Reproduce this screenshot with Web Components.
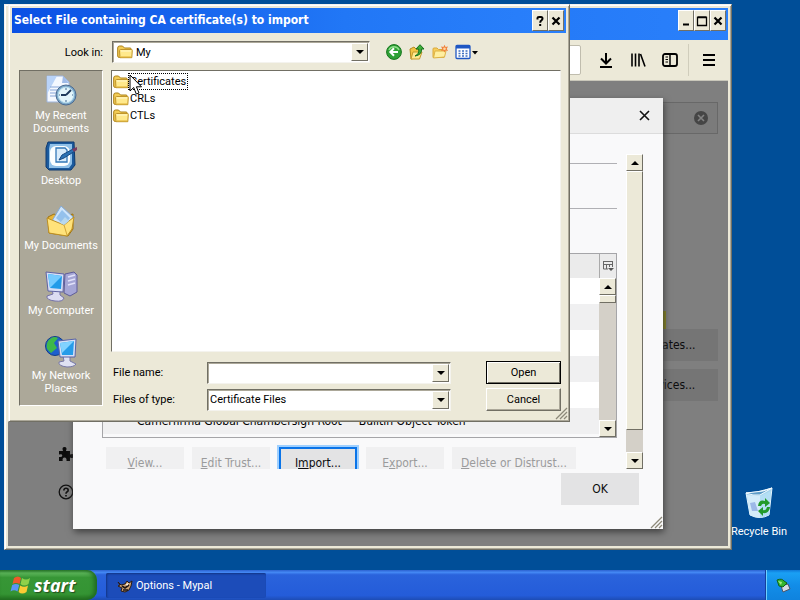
<!DOCTYPE html>
<html lang="en">
<head>
<meta charset="utf-8">
<title>Options - Mypal</title>
<style>
  html, body { height: 100%; }
  body {
    margin: 0;
    overflow: hidden;
    font: 11px/13px Roboto, "Liberation Sans", sans-serif;
    color: #000;
    --face: #ece9d8;
    --shadow: #aca899;
    --dark: #716f64;
    --title-font: bold 12px/16px "DejaVu Sans Condensed", "DejaVu Sans", sans-serif;
    --page-font: 12px/16px "DejaVu Sans Condensed", "DejaVu Sans", sans-serif;
  }
</style>
</head>
<body>
<xp-desktop>
  <xp-shortcut icon="bin">Recycle Bin</xp-shortcut>
  <browser-window></browser-window>
  <file-dialog></file-dialog>
  <task-bar slot="taskbar"></task-bar>
</xp-desktop>

<script>
  // inline svg icons, looked up by name
  const ICONS = {
    folder: ['0 0 16 14', `<path d="M.7 3Q.7 1 2.500 1H5.500L7.500 3H13Q14.300 3 14.300 4.500V12.500H2.500Q.7 12.500 .7 11Z" fill="#f3cc55" stroke="#ab8017"/><path d="M2.500 5.500Q2.500 4.500 3.500 4.500H14.500Q15.500 4.500 15.300 5.500L14.800 12.700H3Z" fill="#ffe98c" stroke="#c1952b"/><path d="M4 6H14" stroke="#fff8d0"/><path d="M3.500 11.800H14.300" stroke="#e9bf4a"/>`],
    back: ['0 0 16 16', `<circle cx="8" cy="8" r="7.400" fill="#2fa136" stroke="#15761c"/><path d="M3 6A5.500 5.500 0 0 1 13 6" fill="none" stroke="#8fdf8a" stroke-width="1.500"/><path d="M12 8H4.500M8 4.300L4.300 8L8 11.700" fill="none" stroke="#fff" stroke-width="2"/>`],
    up: ['0 0 16 16', `<path d="M1 5L5 3L7 5H11V13L2 15Z" fill="#f3c445" stroke="#b58a1e"/><path d="M2 15L4 8H13L10.500 15Z" fill="#ffe88f" stroke="#c39a2c"/><path d="M6 12Q10.500 10 9.700 5H7L11 .7L15 5H12.500Q13 11 6 12Z" fill="#3fae3a" stroke="#17721c"/>`],
    newfolder: ['0 0 16 16', `<path d="M1 5Q1 4 2 4H5L6.500 5.500H12V13.500H1Z" fill="#f7cd5c" stroke="#d9a93a"/><path d="M1.500 14L3 7H14L12.500 13Z" fill="#ffefa0" stroke="#dcb347"/><path d="M12.500 .8L13.600 3L16 2.600L14.800 4.800L16 7L13.600 6.600L12.500 8.600L11.400 6.600L9 7L10.200 4.800L9 2.600L11.400 3Z" fill="#f0813c"/><circle cx="12.500" cy="4.700" r="1.300" fill="#ffd9a0"/>`],
    views: ['0 0 24 16', `<rect x="1" y="1.500" width="14" height="13" rx="1" fill="#fff" stroke="#1f57c3" stroke-width="1.300"/><path d="M1 3H15" stroke="#1f57c3" stroke-width="3"/><path d="M3.500 7H5.500M7 7H9M10.500 7H12.500M3.500 9.500H5.500M7 9.500H9M10.500 9.500H12.500M3.500 12H5.500M7 12H9M10.500 12H12.500" stroke="#3d6fc0" stroke-width="1.400"/><path d="M17 7H23L20 10.500Z"/>`],
    down: ['0 0 8 4', `<path d="M0 0H8L4 4Z"/>`],
    upward: ['0 0 8 4', `<path d="M0 4H8L4 0Z"/>`],
    grip: ['0 0 12 12', `<path d="M1 12L12 1M5 12L12 5M9 12L12 9" stroke="#8d897a" stroke-width="1.300"/>`],
    close: ['0 0 11 11', `<path d="M1 1L10 10M10 1L1 10" stroke="currentColor" stroke-width="1.600"/>`],
    boldclose: ['0 0 10 10', `<path d="M1.500 1.500L8.500 8.500M8.500 1.500L1.500 8.500" stroke="#000" stroke-width="2.200"/>`],
    help: ['0 0 10 10', `<path d="M2.500 3.500V2Q2.500 1 4 1H6Q7.500 1 7.500 2.500Q7.500 3.500 6.500 4.300Q5.200 5 5.200 6.800M5.200 8V10" fill="none" stroke="#000" stroke-width="2"/>`],
    minimize: ['0 0 10 10', `<path d="M2 8.500H8" stroke="#000" stroke-width="2"/>`],
    maximize: ['0 0 10 10', `<path d="M.5 1.500H9.500V9.500H.5ZM.5 1H9.500" fill="none" stroke="#000" stroke-width="1.300"/>`],
    download: ['0 0 16 16', `<path d="M8 1V11M3 6.500L8 11.500L13 6.500M2 15H14" fill="none" stroke="#000" stroke-width="2"/>`],
    library: ['0 0 16 16', `<path d="M2 1.500V14.500M5.500 1.500V14.500M9 1.500V14.500M10.500 2L15 14.500" stroke="#000" stroke-width="1.600"/>`],
    sidebar: ['0 0 16 16', `<rect x="1" y="2" width="14" height="12" rx="2" fill="none" stroke="#000" stroke-width="1.800"/><path d="M8 2V14" stroke="#000" stroke-width="1.500"/><path d="M3.500 5H6M3.500 7.500H6M3.500 10H6" stroke="#000"/>`],
    menu: ['0 0 16 16', `<path d="M2 3H14M2 8H14M2 13H14" stroke="#000" stroke-width="2"/>`],
    clear: ['0 0 16 16', `<circle cx="8" cy="8" r="7" fill="#454545"/><path d="M5 5L11 11M11 5L5 11" stroke="#828282" stroke-width="1.600"/>`],
    puzzle: ['0 0 16 16', `<path d="M1 5H5Q3.500 1 6.500 1Q9.500 1 8 5H12V8.500Q16 7 16 10Q16 13 12 11.500V15H8.500Q9 11.500 6.500 11.500Q4 11.500 4.700 15H1V11Q4.300 11.500 4.300 9.500Q4.300 7.500 1 8.500Z" fill="#0c0c0c"/>`],
    question: ['0 0 16 16', `<circle cx="8" cy="8" r="6.800" fill="none" stroke="#111" stroke-width="1.300"/><path d="M5.800 6.500Q6 4.300 8 4.300Q10.200 4.300 10.200 6.200Q10.200 7.300 8.900 8Q8 8.500 8 9.800M8 11V12.600" fill="none" stroke="#111" stroke-width="1.600"/>`],
    picker: ['0 0 12 12', `<path d="M1 1.500H11M1 4.500H11M1.500 1V9H6M4.500 4V9M7.500 4V7M10.500 1V7" fill="none" stroke="#666"/><path d="M6 8H12L9 11Z" fill="#555"/>`],
    cursor: ['0 0 14 22', `<path d="M1 1V17L4.700 13.500L7.300 20L10 19L7.400 12.800H12.500Z" fill="#fff" stroke="#000"/>`],
    recent: ['0 0 32 32', `<path d="M2 1H18L24 7V27H2Z" fill="#f4f8ff" stroke="#9db4dc"/><path d="M2 1H12L2 19Z" fill="#b9d3f8"/><path d="M18 1L17 8H24Z" fill="#9fbbe8"/><path d="M5 12H19M5 15H15M5 18H14M5 21H14" stroke="#86a5d8"/><circle cx="21" cy="20" r="10" fill="#7ba7c9" stroke="#496a91"/><circle cx="21" cy="20" r="7.800" fill="#e3f5fb" stroke="#b6dcec"/><path d="M21 20L26 15M21 20H16" stroke="#203a5c" stroke-width="1.800"/><path d="M21 13V15M21 25V27M27 20H28M14 20H15" stroke="#426893"/>`],
    desktop: ['0 0 32 32', `<path d="M3 2H29L30 25L26 30H4L1 27V8Z" fill="#1b5a9d" stroke="#103b70"/><path d="M5 4H27V24L24 28H4V9Z" fill="#8fc0e8"/><rect x="5" y="6" width="20" height="20" rx="6" fill="#fbfeff"/><path d="M11 8H20L22 10V22H11Z" fill="#d9ecfb" stroke="#3378b8" stroke-width="1.300"/><path d="M14 20L17 15L28 9L30 11L19 18Z" fill="#2c72b4" stroke="#184a82"/><path d="M27 9L32 7V10L29 12Z" fill="#7b3c60"/>`],
    documents: ['0 0 32 32', `<path d="M3 12L9 9L16 12L28 9V24L23 31L4 28Z" fill="#e7b53a" stroke="#9f7412"/><path d="M7 16L16 1L28 12L25 23L10 24Z" fill="#cfe5fb" stroke="#83abd9"/><path d="M11 13L17 5L25 13L19 20Z" fill="#94c1ec"/><path d="M2 13L19 20L29 12L27 24L22 31L4 28Z" fill="#ffe27a" stroke="#bc8f24"/><path d="M15 18L20 12L24 16L19 20Z" fill="#b7d8ee"/><path d="M19 20L22 30" stroke="#d3a636"/>`],
    computer: ['0 0 32 32', `<path d="M20 4L29 2L32 5V22L25 26L19 23Z" fill="#a5a6d6" stroke="#5f5d99"/><path d="M23 7L30 5M23 11L30 9M23 15L30 13" stroke="#e2e2fa" stroke-width="1.500"/><path d="M7 19H15V25L19 28Q18 32 10 31Q1 30 2 26L8 24Z" fill="#dcdcf2" stroke="#7472a8"/><path d="M1 2L19 4L18 22L3 21Z" fill="#d7def5" stroke="#6063a4"/><path d="M3 4L17 6L16 19L5 18Z" fill="#219be9"/><path d="M3 4L17 6L6 17L5 18Z" fill="#76cbff"/>`],
    network: ['0 0 32 32', `<circle cx="10" cy="11" r="9.500" fill="#1e5fcd" stroke="#123c88"/><path d="M3 6Q8 0 13 3L9 8L12 13L6 18Q-1 13 3 6Z" fill="#3fb849"/><path d="M18 21H25V26L31 29Q29 32 22 32Q13 31 14 27L19 26Z" fill="#e0e2f3" stroke="#7879a8"/><path d="M13 6L31 4L30 22L15 22Z" fill="#d7e0f6" stroke="#5963a5"/><path d="M15 8L29 6L28 20L17 20Z" fill="#269ce9"/><path d="M15 8L29 6L17 18Z" fill="#82d2ff"/>`],
    bin: ['0 0 32 32', `<path d="M3 6L14 5L29 1L26 28Q17 33 7 28Z" fill="#a5d4ee" stroke="#e4f5ff"/><path d="M3 6Q10 9 17 8L29 1L20 4Z" fill="#5f9dc8" stroke="#f4fbff"/><path d="M4 8L17 9V31Q12 31 7 28Z" fill="#d3ecfa"/><path d="M17 9L28 4L26 28L17 31Z" fill="#b3def4"/><path d="M7 16L12 15L15 24L9 24Z" fill="#9db9e8"/><path d="M15 19Q16 12 22 14V11L27 16L22 20V17Q19 16 18 19ZM27 20Q26 27 20 26V29L15 24L20 20V23Q23 24 24 20Z" fill="#219a2a"/>`],
    flag: ['0 0 22 20', `<path d="M4 3Q8 0 11 3L9.500 9Q6 7 2.500 9Z" fill="#f0592a"/><path d="M12 3Q16 6 20 3L18.500 9Q14 12 10.500 9Z" fill="#8fd14a"/><path d="M2.200 10Q6 8 9.200 10L7.500 16.500Q4 14 .5 16.500Z" fill="#5b95f5"/><path d="M10.200 10.500Q14 13 18 10.500L16.500 17Q12 20 8.600 17Z" fill="#fbcb34"/>`],
    mypal: ['0 0 16 16', `<path d="M1 4L4 7L8 6L10 3L12 5L15 3L14 8L12 12L8 14L4 13L5 10L1 8L3 7Z" fill="#cda274" stroke="#2a1a12"/><path d="M5 8L8 10L12 7M6 12H11" stroke="#1d1512" stroke-width="1.600" fill="none"/><path d="M9 6L12 5L10 8Z" fill="#fff"/>`],
    tray: ['0 0 16 16', `<path d="M6 9L13 7L15 12L8 15Z" fill="#d6dbe4" stroke="#4b5568"/><path d="M2 3Q7 1 9 4L12 6L8 10L4 9Z" fill="#35b52f" stroke="#11631a"/><path d="M3 4L7 5L6 8Z" fill="#a4ee83"/>`]
  };

  class XpElement extends HTMLElement {
    constructor(template) {
      super();
      const shadow = this.attachShadow({ mode: "open" });
      shadow.innerHTML = template;
    }
  }

  class XpIcon extends HTMLElement {
    connectedCallback() {
      const [box, art] = ICONS[this.getAttribute("name")];
      const size = box.split(" ");
      const shadow = this.attachShadow({ mode: "open" });
      shadow.innerHTML = `
      <style>
        :host { display: block; flex: none; }
        svg { display: block; overflow: visible; }
      </style>
      <svg width="${size[2]}" height="${size[3]}" viewBox="${box}" aria-hidden="true">${art}</svg>`;
    }
  }
  customElements.define("xp-icon", XpIcon);

  // square caption button in the title bars
  class CaptionButton extends HTMLElement {
    connectedCallback() {
      const shadow = this.attachShadow({ mode: "open" });
      shadow.innerHTML = `
      <style>
        :host { display: block; }
        button {
          display: flex;
          align-items: center;
          justify-content: center;
          width: 16px;
          height: 21px;
          padding: 0;
          background: var(--face);
          border: 1px solid;
          border-color: #fff var(--dark) var(--dark) #fff;
        }
      </style>
      <button type="button" aria-label="${this.getAttribute("label")}"><xp-icon name="${this.getAttribute("icon")}"></xp-icon></button>`;
    }
  }
  customElements.define("caption-button", CaptionButton);

  // vertical scrollbar: thumb and rest are the flex values of the two parts of the track
  class ScrollBar extends HTMLElement {
    connectedCallback() {
      const shadow = this.attachShadow({ mode: "open" });
      shadow.innerHTML = `
      <style>
        :host { display: flex; flex-direction: column; flex: none; width: 17px; background: #d4d0c8; }
        button {
          display: flex;
          align-items: center;
          justify-content: center;
          flex: none;
          height: 17px;
          padding: 0;
          background: var(--face);
          border: 1px solid;
          border-color: #fff var(--dark) var(--dark) #fff;
        }
        .thumb {
          flex: ${this.getAttribute("thumb")};
          background: var(--face);
          border: 1px solid;
          border-color: #fff var(--dark) var(--dark) #fff;
        }
        .rest { flex: ${this.getAttribute("rest")}; }
      </style>
      <button type="button" aria-label="Scroll up"><xp-icon name="upward"></xp-icon></button>
      <div class="thumb"></div>
      <div class="rest"></div>
      <button type="button" aria-label="Scroll down"><xp-icon name="down"></xp-icon></button>`;
    }
  }
  customElements.define("scroll-bar", ScrollBar);

  class XpWindow extends XpElement {
    constructor() {
      super(`
      <style>
        :host {
          box-sizing: border-box;
          display: flex;
          flex-direction: column;
          background: var(--face);
          border: 1px solid;
          border-color: #f4f3ee #716f64 #716f64 #f4f3ee;
          box-shadow: inset 1px 1px #fff, inset -1px -1px #aca899;
          padding: 3px;
        }
        header {
          display: flex;
          flex: none;
          align-items: flex-start;
          height: var(--bar, 25px);
          padding: 2px 2px 0;
          box-sizing: border-box;
          background: linear-gradient(90deg, #0a50e4, #2177f6 60%, #2a80fb);
          color: #fff;
          font: var(--title-font);
        }
        h1 { flex: 1; margin: 0; padding-top: 2px; font: inherit; white-space: nowrap; }
        .buttons { display: flex; }
        .body { flex: 1; min-height: 0; display: flex; flex-direction: column; }
      </style>
      <header>
        <h1><slot name="title"></slot></h1>
        <div class="buttons"><slot name="buttons"></slot></div>
      </header>
      <div class="body"><slot></slot></div>`);
    }
  }
  customElements.define("xp-window", XpWindow);

  // flat button of the options page
  class PageButton extends HTMLElement {
    connectedCallback() {
      const off = this.hasAttribute("disabled") ? "disabled" : "";
      const shadow = this.attachShadow({ mode: "open" });
      shadow.innerHTML = `
      <style>
        :host { display: block; }
        button {
          display: block;
          width: 100%;
          min-width: 78px;
          height: 32px;
          padding: 0 8px;
          border: 0;
          background: var(--fill, #e3e3e4);
          color: #0c0c0d;
          font: var(--page-font);
          white-space: nowrap;
        }
        button:disabled { background: #f0f0f1; color: #9b9b9c; }
        :host([focused]) button { border: 2px solid #0a74e8; box-shadow: 0 0 0 2px #9fd0ff; }
      </style>
      <button type="button" ${off}><slot></slot></button>`;
    }
  }
  customElements.define("page-button", PageButton);

  class CertificateManager extends XpElement {
    constructor() {
      super(`
      <style>
        :host { display: flex; flex-direction: column; background: #f9f9fa; box-shadow: 1px 3px 7px #404040; font: var(--page-font); }
        header {
          display: flex;
          flex: none;
          justify-content: flex-end;
          align-items: center;
          height: 35px;
          padding: 0 13px;
          background: #efefef;
          border-bottom: 1px solid #dcdcdc;
        }
        .close { display: flex; padding: 0; border: 0; background: none; color: #111; }
        .area { flex: 1; min-height: 0; display: flex; gap: 9px; margin: 20px 20px 4px 29px; overflow: hidden; }
        .content { flex: 1; min-width: 0; }
        .line { height: 44px; border-top: 1px solid #b0b0b4; }
        .line:first-child { margin-top: 9px; }
        .tree { display: flex; height: 183px; border: 1px solid #a5a5a8; margin-bottom: 9px; }
        .side { display: flex; flex-direction: column; }
        .picker { display: flex; align-items: center; justify-content: center; height: 24px; padding: 0; border: 0; border-left: 1px solid #aaa; background: #ebebeb; }
        .side scroll-bar { flex: 1; }
        table { flex: 1; border-collapse: collapse; align-self: flex-start; }
        thead td { height: 24px; background: #ebebeb; }
        td { padding: 0 0 0 17px; height: 26px; white-space: nowrap; }
        td:first-child { padding-left: 34px; width: 202px; }
        tbody tr { background: #fff; }
        tbody tr:nth-child(even) { background: #f0f0f1; }
        .actions { display: flex; gap: 8px; padding: 0 4px; }
        .import { padding: 0 1px; }
        .wide { min-width: 124px; }
        footer { display: flex; justify-content: flex-end; padding: 0 24px 24px; position: relative; }
        .grip { position: absolute; right: 1px; bottom: 1px; }
      </style>
      <header><button class="close" type="button" aria-label="Close"><xp-icon name="close"></xp-icon></button></header>
      <div class="area">
        <div class="content">
          <div class="line"></div>
          <div class="line"></div>
          <div class="tree">
            <table>
              <thead><tr><td></td><td></td></tr></thead>
              <tbody>
                <tr><td></td><td></td></tr>
                <tr><td></td><td></td></tr>
                <tr><td></td><td></td></tr>
                <tr><td></td><td></td></tr>
                <tr><td></td><td></td></tr>
                <tr><td>Camerfirma Global Chambersign Root</td><td>Builtin Object Token</td></tr>
              </tbody>
            </table>
            <div class="side">
              <button class="picker" type="button" aria-label="Select columns"><xp-icon name="picker"></xp-icon></button>
              <scroll-bar thumb="0 0 6px" rest="1"></scroll-bar>
            </div>
          </div>
          <div class="actions">
            <page-button disabled><u>V</u>iew...</page-button>
            <page-button disabled><u>E</u>dit Trust...</page-button>
            <page-button class="import" focused>I<u>m</u>port...</page-button>
            <page-button disabled>E<u>x</u>port...</page-button>
            <page-button disabled class="wide"><u>D</u>elete or Distrust...</page-button>
          </div>
        </div>
        <scroll-bar thumb="260" rest="22"></scroll-bar>
      </div>
      <footer><page-button>OK</page-button><xp-icon class="grip" name="grip"></xp-icon></footer>`);
    }
  }
  customElements.define("certificate-manager", CertificateManager);

  class BrowserWindow extends XpElement {
    constructor() {
      super(`
      <style>
        :host { position: absolute; inset: 4px 68px 20px 4px; }
        xp-window { height: 100%; --bar: 32px; }
        caption-button:last-child { margin-left: 2px; }
        nav { display: flex; flex: none; align-items: center; justify-content: flex-end; height: 41px; box-sizing: border-box; padding: 0 11px; gap: 16px; border-bottom: 1px solid #c9c7ba; }
        nav button { display: flex; padding: 0; border: 0; background: none; }
        nav hr { width: 0; height: 32px; margin: 0 -4px 0 -6px; border: 0; border-left: 1px solid #d0cdbc; }
        .url { flex: 1; min-width: 0; height: 30px; box-sizing: border-box; margin-right: 1px; border: 1px solid #c0bdae; border-radius: 2px; background: #fff; }
        .page { flex: 1; position: relative; background: #7f7f7f; display: flex; justify-content: space-between; }
        .rail { display: flex; flex-direction: column; justify-content: flex-end; gap: 22px; padding: 0 50px 46px; }
        .rail a { display: block; }
        .main { display: flex; flex-direction: column; align-items: flex-end; padding: 21px 10px 0; }
        .search { display: flex; align-items: center; width: 280px; height: 32px; box-sizing: border-box; border: 1px solid #686868; background: #7b7b7b; padding: 0 8px; }
        .search input { flex: 1; min-width: 0; border: 0; background: none; }
        .main page-button { --fill: #757575; width: 146px; margin-bottom: 8px; }
        .mark { width: 24px; height: 18px; margin: 177px 52px 0 0; background: #8b8a14; }
        certificate-manager { position: absolute; inset: 17px 65px; }
      </style>
      <xp-window>
        <caption-button slot="buttons" icon="minimize" label="Minimize"></caption-button>
        <caption-button slot="buttons" icon="maximize" label="Maximize"></caption-button>
        <caption-button slot="buttons" icon="boldclose" label="Close"></caption-button>
        <nav>
          <input class="url" aria-label="Address">
          <button type="button" aria-label="Downloads"><xp-icon name="download"></xp-icon></button>
          <button type="button" aria-label="Library"><xp-icon name="library"></xp-icon></button>
          <button type="button" aria-label="Sidebars"><xp-icon name="sidebar"></xp-icon></button>
          <hr>
          <button type="button" aria-label="Menu"><xp-icon name="menu"></xp-icon></button>
        </nav>
        <div class="page">
          <div class="rail">
            <a href="#addons" aria-label="Add-ons"><xp-icon name="puzzle"></xp-icon></a>
            <a href="#support" aria-label="Support"><xp-icon name="question"></xp-icon></a>
          </div>
          <div class="main">
            <div class="search"><input aria-label="Find in options"><xp-icon name="clear"></xp-icon></div>
            <div class="mark"></div>
            <page-button>View Certificates...</page-button>
            <page-button>Security Devices...</page-button>
          </div>
          <certificate-manager></certificate-manager>
        </div>
      </xp-window>`);
    }
  }
  customElements.define("browser-window", BrowserWindow);

  // sunken field with a drop-down arrow; the control itself is slotted
  class ComboBox extends XpElement {
    constructor() {
      super(`
      <style>
        :host {
          display: flex;
          align-items: center;
          height: 22px;
          box-sizing: border-box;
          background: #fff;
          border: 1px solid;
          border-color: var(--dark) #f4f3ee #f4f3ee var(--dark);
          box-shadow: inset 1px 1px #aca899;
          padding: 1px;
        }
        .arrow {
          display: flex;
          align-items: center;
          justify-content: center;
          flex: none;
          width: 17px;
          height: 18px;
          box-sizing: border-box;
          background: var(--face);
          border: 1px solid;
          border-color: #fff var(--dark) var(--dark) #fff;
          pointer-events: none;
        }
      </style>
      <slot></slot>
      <span class="arrow"><xp-icon name="down"></xp-icon></span>`);
    }
  }
  customElements.define("combo-box", ComboBox);

  class PlaceLink extends HTMLElement {
    connectedCallback() {
      const shadow = this.attachShadow({ mode: "open" });
      shadow.innerHTML = `
      <style>
        :host { display: block; height: 65px; }
        a { display: flex; flex-direction: column; align-items: center; gap: 2px; color: #fff; text-align: center; text-decoration: none; }
      </style>
      <a href="#place"><xp-icon name="${this.getAttribute("icon")}"></xp-icon><span><slot></slot></span></a>`;
    }
  }
  customElements.define("place-link", PlaceLink);

  class FileDialog extends XpElement {
    constructor() {
      super(`
      <style>
        :host { position: absolute; left: 8px; top: 4px; }
        xp-window { width: 562px; }
        caption-button:last-child { margin-left: 2px; }
        .look { display: grid; grid-template-columns: 84px 258px 1fr; column-gap: 9px; align-items: center; padding: 8px 7px 0; }
        .look label { text-align: right; }
        .look combo-box xp-icon { margin: 0 2px 0 3px; }
        select, input {
          flex: 1;
          min-width: 0;
          height: 16px;
          padding: 0 1px;
          border: 0;
          outline: 0;
          background: none;
          appearance: none;
          font: inherit;
          color: #000;
        }
        .tools { display: flex; gap: 7px; padding-left: 7px; }
        .tools button { display: flex; padding: 0; border: 0; background: none; }
        .main { display: flex; gap: 8px; padding: 7px 5px 7px 7px; }
        .places { width: 84px; height: 336px; flex: none; box-sizing: border-box; padding-top: 4px; background: #aca899; border: 1px solid; border-color: #716f64 #fff #fff #716f64; }
        .right { flex: 1; display: flex; flex-direction: column; gap: 9px; }
        .list {
          height: 282px;
          box-sizing: border-box;
          margin: 0;
          padding: 2px 1px;
          list-style: none;
          background: #fff;
          border: 1px solid;
          border-color: #716f64 #f4f3ee #f4f3ee #716f64;
        }
        .list li { display: flex; align-items: center; height: 17px; }
        .list span { padding: 1px; }
        .list .current { outline: 1px dotted #000; }
        .fields { display: grid; grid-template-columns: 96px 1fr 75px; row-gap: 4px; align-items: center; }
        .fields label { padding-left: 2px; }
        .fields combo-box { margin-right: 35px; }
        .push { height: 23px; padding: 0; font: inherit; background: #ece9d8; border: 1px solid; border-color: #fff #716f64 #716f64 #fff; box-shadow: inset -1px -1px #aca899; }
        .default { border-color: #000; box-shadow: inset 1px 1px #fff, inset -1px -1px #716f64; }
        .grip { position: absolute; right: 3px; bottom: 3px; }
        .cursor { position: absolute; left: 121px; top: 70px; }
      </style>
      <xp-window>
        <span slot="title">Select File containing CA certificate(s) to import</span>
        <caption-button slot="buttons" icon="help" label="Help"></caption-button>
        <caption-button slot="buttons" icon="boldclose" label="Close"></caption-button>
        <div class="look">
          <label for="look">Look in:</label>
          <combo-box><xp-icon name="folder"></xp-icon><select id="look"><option>My</option></select></combo-box>
          <div class="tools">
            <button type="button" aria-label="Back"><xp-icon name="back"></xp-icon></button>
            <button type="button" aria-label="Up one level"><xp-icon name="up"></xp-icon></button>
            <button type="button" aria-label="Create new folder"><xp-icon name="newfolder"></xp-icon></button>
            <button type="button" aria-label="View menu"><xp-icon name="views"></xp-icon></button>
          </div>
        </div>
        <div class="main">
          <div class="places">
            <place-link icon="recent">My Recent<br>Documents</place-link>
            <place-link icon="desktop">Desktop</place-link>
            <place-link icon="documents">My Documents</place-link>
            <place-link icon="computer">My Computer</place-link>
            <place-link icon="network">My Network<br>Places</place-link>
          </div>
          <div class="right">
            <ul class="list">
              <li><xp-icon name="folder"></xp-icon><span class="current">Certificates</span></li>
              <li><xp-icon name="folder"></xp-icon><span>CRLs</span></li>
              <li><xp-icon name="folder"></xp-icon><span>CTLs</span></li>
            </ul>
            <div class="fields">
              <label for="name">File name:</label>
              <combo-box><input id="name" type="text"></combo-box>
              <button class="push default" type="button">Open</button>
              <label for="type">Files of type:</label>
              <combo-box><select id="type"><option>Certificate Files</option></select></combo-box>
              <button class="push" type="button">Cancel</button>
            </div>
          </div>
        </div>
      </xp-window>
      <xp-icon class="grip" name="grip"></xp-icon>
      <xp-icon class="cursor" name="cursor"></xp-icon>`);
    }
  }
  customElements.define("file-dialog", FileDialog);

  class XpShortcut extends HTMLElement {
    connectedCallback() {
      const shadow = this.attachShadow({ mode: "open" });
      shadow.innerHTML = `
      <style>
        :host { position: absolute; right: 9px; bottom: 32px; width: 64px; }
        a { display: flex; flex-direction: column; align-items: center; gap: 6px; color: #fff; text-decoration: none; white-space: nowrap; }
      </style>
      <a href="#bin"><xp-icon name="${this.getAttribute("icon")}"></xp-icon><slot></slot></a>`;
    }
  }
  customElements.define("xp-shortcut", XpShortcut);

  class TaskBar extends XpElement {
    constructor() {
      super(`
      <style>
        :host { display: flex; height: 30px; background: linear-gradient(#2d62d0, #4488f4 8%, #2a63dc 16%, #245cd9 85%, #1d4cb5); }
        button { border: 0; padding: 0; color: #fff; display: flex; align-items: center; }
        .start {
          width: 97px;
          padding-left: 10px;
          gap: 2px;
          border-radius: 0 10px 10px 0;
          background: linear-gradient(#2f7d2f, #5cb55a 10%, #379636 25%, #349433 80%, #23701f);
          box-shadow: inset -3px 0 4px #1f6a22;
          font: italic bold 18px/22px "Open Sans", "Liberation Sans", sans-serif;
          text-shadow: 1px 1px 1px #234d1f;
        }
        .task { width: 160px; margin: 3px 0 2px 9px; padding-left: 11px; gap: 3px; border-radius: 2px; background: #1c4cb9; box-shadow: inset 1px 1px 2px #123484; font: inherit; }
        .tray { display: flex; align-items: center; justify-content: center; width: 34px; margin-left: auto; background: linear-gradient(#0f78d8, #1aa0f4 10%, #128de8 50%, #0f83de); box-shadow: inset 1px 0 #6fd0ff, -1px 0 #163f9c; }
      </style>
      <button class="start" type="button"><xp-icon name="flag"></xp-icon>start</button>
      <button class="task" type="button"><xp-icon name="mypal"></xp-icon>Options - Mypal</button>
      <div class="tray"><xp-icon name="tray"></xp-icon></div>`);
    }
  }
  customElements.define("task-bar", TaskBar);

  class XpDesktop extends XpElement {
    constructor() {
      super(`
      <style>
        :host { display: flex; flex-direction: column; height: 100vh; background: #004e98; overflow: hidden; }
        main { flex: 1; position: relative; min-height: 0; }
      </style>
      <main><slot></slot></main>
      <slot name="taskbar"></slot>`);
    }
  }
  customElements.define("xp-desktop", XpDesktop);
</script>
</body>
</html>
